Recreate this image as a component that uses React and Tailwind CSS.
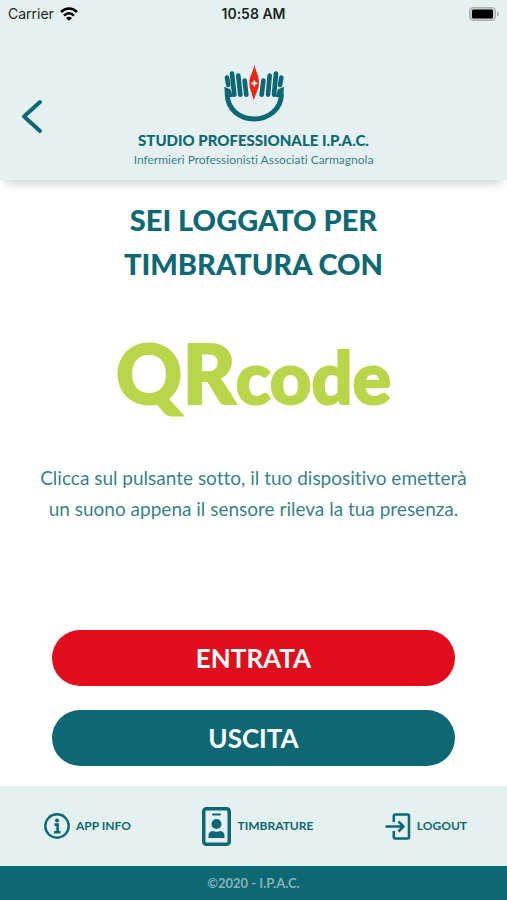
import { useState } from 'react';

/** Carrier, clock and battery on top of the header */
function StatusBar() {
  return (
    <div className="grid h-7 grid-cols-3 items-center px-2 font-['Inter',sans-serif] text-sm text-[#1c2526]">
      <div className="flex items-center gap-1.5">
        <span>Carrier</span>
        <svg viewBox="0 0 54 42" className="h-3.5 w-[18px]" fill="none" stroke="#000" strokeWidth="8">
          <path d="M3 15C17 1 37 1 51 15" />
          <path d="M12 26C21 17 33 17 42 26" />
          <path d="M27 41L18 33C23 28 31 28 36 33Z" fill="#000" stroke="none" />
        </svg>
      </div>
      <span className="text-center font-semibold">10:58 AM</span>
      <svg viewBox="0 0 30 15" className="h-[15px] w-[30px] justify-self-end" aria-label="Batteria">
        <rect x="0.5" y="0.5" width="26" height="13" rx="3.5" fill="#c3cac9" stroke="#a9b1b0" />
        <rect x="3" y="2.500" width="21" height="9" rx="1.5" fill="#000" />
        <path d="M28 4.500C30.500 5 30.500 9 28 9.500Z" fill="#a9b1b0" />
      </svg>
    </div>
  );
}

/** Two hands around a flame, with the name of the practice */
function Logo() {
  return (
    <div className="flex flex-col items-center">
      <svg viewBox="70 25 186 174" className="h-[58px] w-[62px]" fill="none" stroke="#0d6874" strokeLinecap="round">
        <path d="M83 116C83 162 121 190 163 190S245 162 245 116" strokeWidth="15" strokeLinecap="butt" />
        <g strokeWidth="14">
          <path d="M82 66L86 88" />
          <path d="M97 54L104 117" />
          <path d="M116 60L122 117" />
          <path d="M135 75L140 117" />
          <path d="M245 66L241 88" />
          <path d="M229 54L223 117" />
          <path d="M210 60L205 117" />
          <path d="M191 75L186 117" />
        </g>
        <path d="M74 93L92 101L100 124L76 124Z" fill="#0d6874" stroke="none" />
        <path d="M253 93L235 101L227 124L251 124Z" fill="#0d6874" stroke="none" />
        <path d="M164 26C166 43 178 60 178 80C178 99 169 113 162 134C158 113 149 99 149 81C149 62 162 48 164 26Z" fill="#ee2414" stroke="none" />
        <path d="M164 74V92M155 83H173" stroke="#fff" strokeWidth="5" strokeLinecap="butt" />
      </svg>
      <p className="mt-1.5 text-[15px] leading-6 font-black text-[#0d6874]">STUDIO PROFESSIONALE I.P.A.C.</p>
      <p className="text-xs leading-4 text-[#0d6874]/85">Infermieri Professionisti Associati Carmagnola</p>
    </div>
  );
}

function Header() {
  return (
    <header className="bg-[#e5f1f1] pb-3 shadow-[0_8px_10px_-5px_rgba(0,0,0,0.2)]">
      <StatusBar />
      <div className="grid grid-cols-[1fr_auto_1fr] pt-9">
        <button type="button" aria-label="Indietro" className="mt-[34px] ml-5 h-9 w-6 cursor-pointer self-start">
          <svg viewBox="0 0 24 36" className="h-9 w-6" fill="none" stroke="#0d6874" strokeWidth="4" strokeLinecap="round" strokeLinejoin="round">
            <path d="M20 4L4 18.500L20 33" />
          </svg>
        </button>
        <Logo />
      </div>
    </header>
  );
}

function InfoIcon() {
  return (
    <svg viewBox="0 0 26 26" className="size-[26px]" fill="none" stroke="#0d6874">
      <circle cx="13" cy="13" r="11.700" strokeWidth="2.400" />
      <circle cx="13" cy="7.600" r="2" fill="#0d6874" stroke="none" />
      <path d="M10.500 11.600H13.600V19M10 19.200H16.500" strokeWidth="2.600" />
    </svg>
  );
}

function BadgeIcon() {
  return (
    <svg viewBox="0 0 29 39" className="h-[39px] w-[29px]" fill="#0d6874">
      <rect x="1.750" y="1.750" width="25.500" height="35.500" rx="2.500" fill="none" stroke="#0d6874" strokeWidth="3.500" />
      <rect x="10" y="6.500" width="9" height="2" rx="1" />
      <circle cx="14.500" cy="17" r="5" />
      <path d="M6.500 31V28.500C6.500 25.500 8.500 24 11 24C13 25 16 25 18 24C20.500 24 22.500 25.500 22.500 28.500V31Z" />
    </svg>
  );
}

function LogoutIcon() {
  return (
    <svg viewBox="0 0 26 27" className="h-[27px] w-[26px]" fill="none" stroke="#0d6874" strokeWidth="2.600" strokeLinejoin="round">
      <path d="M8.800 9V3Q8.800 1.500 10.300 1.500H22.500Q24 1.500 24 3V24Q24 25.500 22.500 25.500H10.300Q8.800 25.500 8.800 24V18" />
      <path d="M0.500 13.500H18M13.500 8.500L18.500 13.500L13.500 18.500" />
    </svg>
  );
}

const links = [
  { href: '#info', label: 'APP INFO', icon: <InfoIcon /> },
  { href: '#timbrature', label: 'TIMBRATURE', icon: <BadgeIcon /> },
  { href: '#logout', label: 'LOGOUT', icon: <LogoutIcon /> },
];

function Footer() {
  return (
    <footer>
      <nav className="flex h-20 items-center justify-between bg-[#e5f1f1] pr-10 pl-11">
        {links.map(link => (
          <a key={link.href} href={link.href} className="flex items-center gap-1.5 text-xs font-bold text-[#0d6874]">
            {link.icon}
            {link.label}
          </a>
        ))}
      </nav>
      <p className="bg-[#0d6874] text-center text-[13px] leading-[34px] font-bold text-[#86b3b9]">©2020 - I.P.A.C.</p>
    </footer>
  );
}

export default function App() {
  const [stamp, setStamp] = useState(null);

  return (
    <div className="flex min-h-screen flex-col bg-white font-['Lato',sans-serif] [font-variant-ligatures:none]">
      <Header />

      <main className="flex flex-1 flex-col items-center pt-[18px] text-center">
        <h1 className="text-[29px] leading-11 font-black text-[#0d6874]">
          SEI LOGGATO PER
          <br />
          TIMBRATURA CON
        </h1>

        <p className="mt-9 text-[82px] leading-[100px] font-black text-[#b9d64b] [-webkit-text-stroke:2px_#b9d64b]">
          QR<span className="text-7xl">code</span>
        </p>

        <p className="mt-10 px-8 text-[19px] leading-[31px] text-[#0d6874]/85">
          Clicca sul pulsante sotto, il tuo dispositivo emetterà un suono appena il sensore rileva la tua presenza.
        </p>

        {/* Clock in / clock out */}
        <div className="mt-auto flex w-full flex-col gap-6 px-[52px] pb-5">
          <button
            type="button"
            aria-pressed={stamp === 'entrata'}
            onClick={() => setStamp('entrata')}
            className="h-14 cursor-pointer rounded-full bg-[#e00d1d] text-[26px] font-bold text-white"
          >
            ENTRATA
          </button>
          <button
            type="button"
            aria-pressed={stamp === 'uscita'}
            onClick={() => setStamp('uscita')}
            className="h-14 cursor-pointer rounded-full bg-[#0d6874] text-[26px] font-bold text-white"
          >
            USCITA
          </button>
        </div>
      </main>

      <Footer />
    </div>
  );
}
